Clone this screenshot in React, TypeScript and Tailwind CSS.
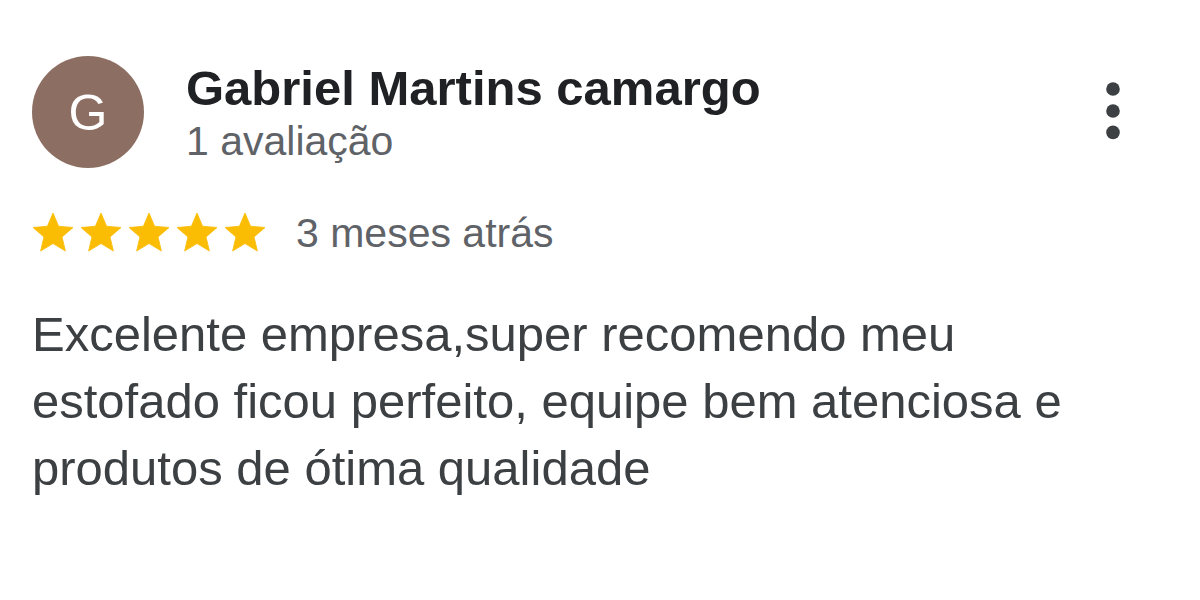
import React from "react";

const Star = () => (
  <svg width="48" height="48" viewBox="0 0 24 24" className="block">
    <path
      fill="#fbbc04"
      strokeLinejoin="round"
      stroke="#fbbc04"
      strokeWidth="0.4"
      d="M12 17.27L18.18 21l-1.64-7.03L22 9.24l-7.19-.61L12 2 9.19 8.63 2 9.24l5.46 4.73L5.82 21z"
    />
  </svg>
);

export default function App() {
  return (
    <div
      className="w-[1200px] h-[600px] bg-white overflow-hidden pl-[32px] pt-[56px]"
      style={{ fontFamily: '"Liberation Sans", Arial, sans-serif' }}
    >
      <div className="flex items-start justify-between pr-[72px]">
        <div className="flex items-start">
          <div className="w-[112px] h-[112px] rounded-full bg-[#8d6e63] flex items-center justify-center">
            <span className="text-white text-[50px] leading-none pt-[2px]">G</span>
          </div>
          <div className="ml-[42px] mt-[4px]">
            <div className="text-[49px] leading-[56px] font-bold text-[#202124] whitespace-nowrap">
              Gabriel Martins camargo
            </div>
            <div className="text-[41px] leading-[50px] text-[#5f6368] whitespace-nowrap">
              1 avaliação
            </div>
          </div>
        </div>
        <svg width="30" height="72" viewBox="0 0 30 72" className="mt-[19px] block">
          <circle cx="15" cy="14" r="6.8" fill="#3c4043" />
          <circle cx="15" cy="36" r="6.8" fill="#3c4043" />
          <circle cx="15" cy="57.4" r="6.8" fill="#3c4043" />
        </svg>
      </div>

      <div className="flex items-center mt-[41px] -ml-[3px]">
        <div className="flex">
          <Star />
          <Star />
          <Star />
          <Star />
          <Star />
        </div>
        <span className="ml-[27px] text-[41px] leading-[48px] text-[#5f6368] whitespace-nowrap">
          3 meses atrás
        </span>
      </div>

      <p className="mt-[44px] max-w-[1090px] text-[49px] leading-[67px] text-[#3c4043]">
        Excelente empresa,super recomendo meu estofado ficou perfeito, equipe bem atenciosa e
        produtos de ótima qualidade
      </p>
    </div>
  );
}
